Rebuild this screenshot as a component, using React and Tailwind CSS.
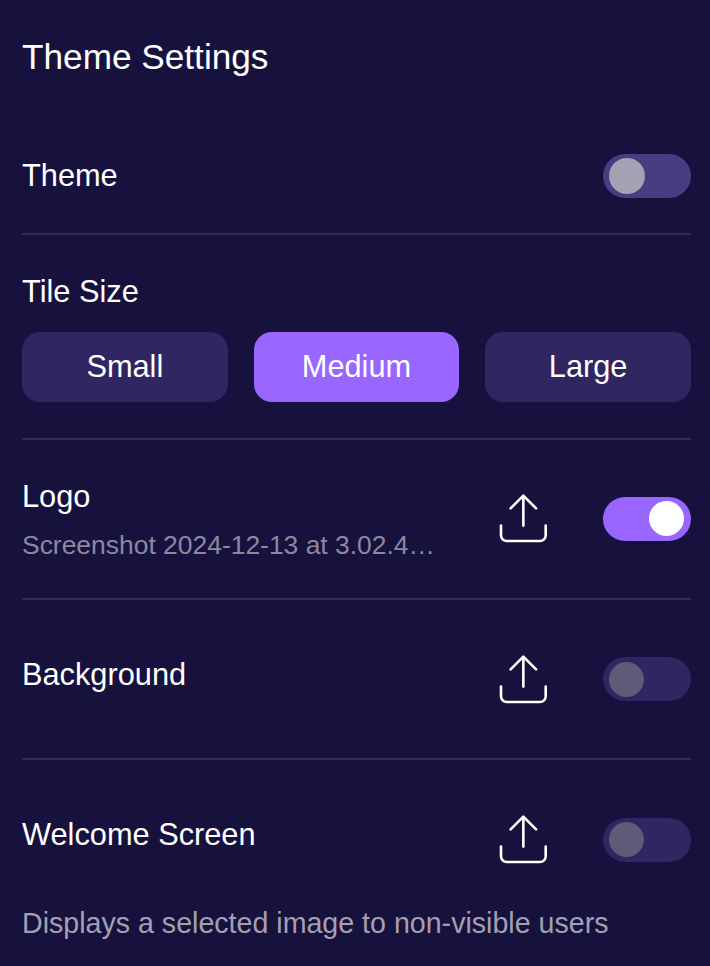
import React, { useState } from 'react';

const sizes = ['Small', 'Medium', 'Large'];

const Toggle = ({ on, onChange, track, knob, label }) => (
  <button
    role="switch"
    aria-checked={on}
    aria-label={label}
    onClick={() => onChange(!on)}
    className={`flex h-11 w-[88px] shrink-0 items-center rounded-full pl-[6px] pr-[7px] ${
      on ? 'justify-end bg-[#9966ff]' : `justify-start ${track}`
    }`}
  >
    <span className={`rounded-full ${on ? 'mb-px size-[35px] bg-white' : knob}`} />
  </button>
);

const UploadIcon = () => (
  <svg viewBox="0 0 50 50" className="size-[50px]" fill="none" stroke="#fff" strokeWidth="2.6" strokeLinecap="round" strokeLinejoin="round">
    <path d="M24.35 32.6V3M11.6 15.4 24.35 2.6l12.75 12.8" />
    <path d="M2 32.6v9.6a5.8 5.8 0 0 0 5.8 5.8h33.1a5.8 5.8 0 0 0 5.8-5.8v-9.6" />
  </svg>
);

const UploadRow = ({ title, file, on, onChange, className, textClass, iconClass, knobClass = '' }) => (
  <div className={`flex items-center ${className}`}>
    <div className={`min-w-0 flex-1 ${textClass}`}>
      <p className="text-[30.75px] leading-9">{title}</p>
      {file && <p className="mt-3 text-[26.45px] leading-9 text-[#8b889f]">{file}</p>}
    </div>
    <button aria-label={`Upload ${title}`} className={`mr-[54px] ${iconClass}`}>
      <UploadIcon />
    </button>
    <Toggle label={title} on={on} onChange={onChange} track="bg-[#2f2662]" knob={`size-[35px] bg-[#5f5a78] ${knobClass}`} />
  </div>
);

const App = () => {
  const [theme, setTheme] = useState(false);
  const [size, setSize] = useState('Medium');
  const [logo, setLogo] = useState(true);
  const [background, setBackground] = useState(false);
  const [welcome, setWelcome] = useState(false);

  return (
    <div className="h-[966px] overflow-hidden bg-[#17113e] pl-[22px] pr-[19px] font-['Liberation_Sans',Arial,sans-serif] text-white">
      <h1 className="flex h-[118px] items-center pb-1 text-[35.2px] leading-10">Theme Settings</h1>

      {/* Theme */}
      <div className="flex h-[117px] items-center justify-between border-b-2 border-[#312a54]">
        <p className="text-[30.75px] leading-9">Theme</p>
        <Toggle label="Theme" on={theme} onChange={setTheme} track="bg-[#483c82]" knob="size-9 bg-[#a5a1b2]" />
      </div>

      {/* Tile size */}
      <div className="h-[205px] border-b-2 border-[#312a54] pt-[39px]">
        <p className="text-[30.75px] leading-9">Tile Size</p>
        <div className="mt-[22px] grid grid-cols-3 gap-[26px]">
          {sizes.map((s) => (
            <button
              key={s}
              onClick={() => setSize(s)}
              className={`h-[70px] rounded-[18px] text-[30.75px] leading-9 ${
                s === size ? 'bg-[#9966ff]' : 'bg-[#2f2662]'
              }`}
            >
              {s}
            </button>
          ))}
        </div>
      </div>

      {/* Images */}
      <UploadRow
        title="Logo"
        file="Screenshot 2024-12-13 at 3.02.4…"
        on={logo}
        onChange={setLogo}
        className="h-[160px] border-b-2 border-[#312a54]"
        textClass="pt-1"
        iconClass="mb-0.5"
      />
      <UploadRow
        title="Background"
        on={background}
        onChange={setBackground}
        className="h-[160px] border-b-2 border-[#312a54]"
        textClass="pb-2"
        iconClass=""
      />
      <UploadRow
        title="Welcome Screen"
        on={welcome}
        onChange={setWelcome}
        className="h-[160px]"
        textClass="pb-2.5"
        iconClass="mb-0.5"
        knobClass="mb-0.5"
      />
      <p className="-mt-[15px] text-[28.6px] leading-9 text-[#a3a0b2]">Displays a selected image to non-visible users</p>
    </div>
  );
};

export default App;
